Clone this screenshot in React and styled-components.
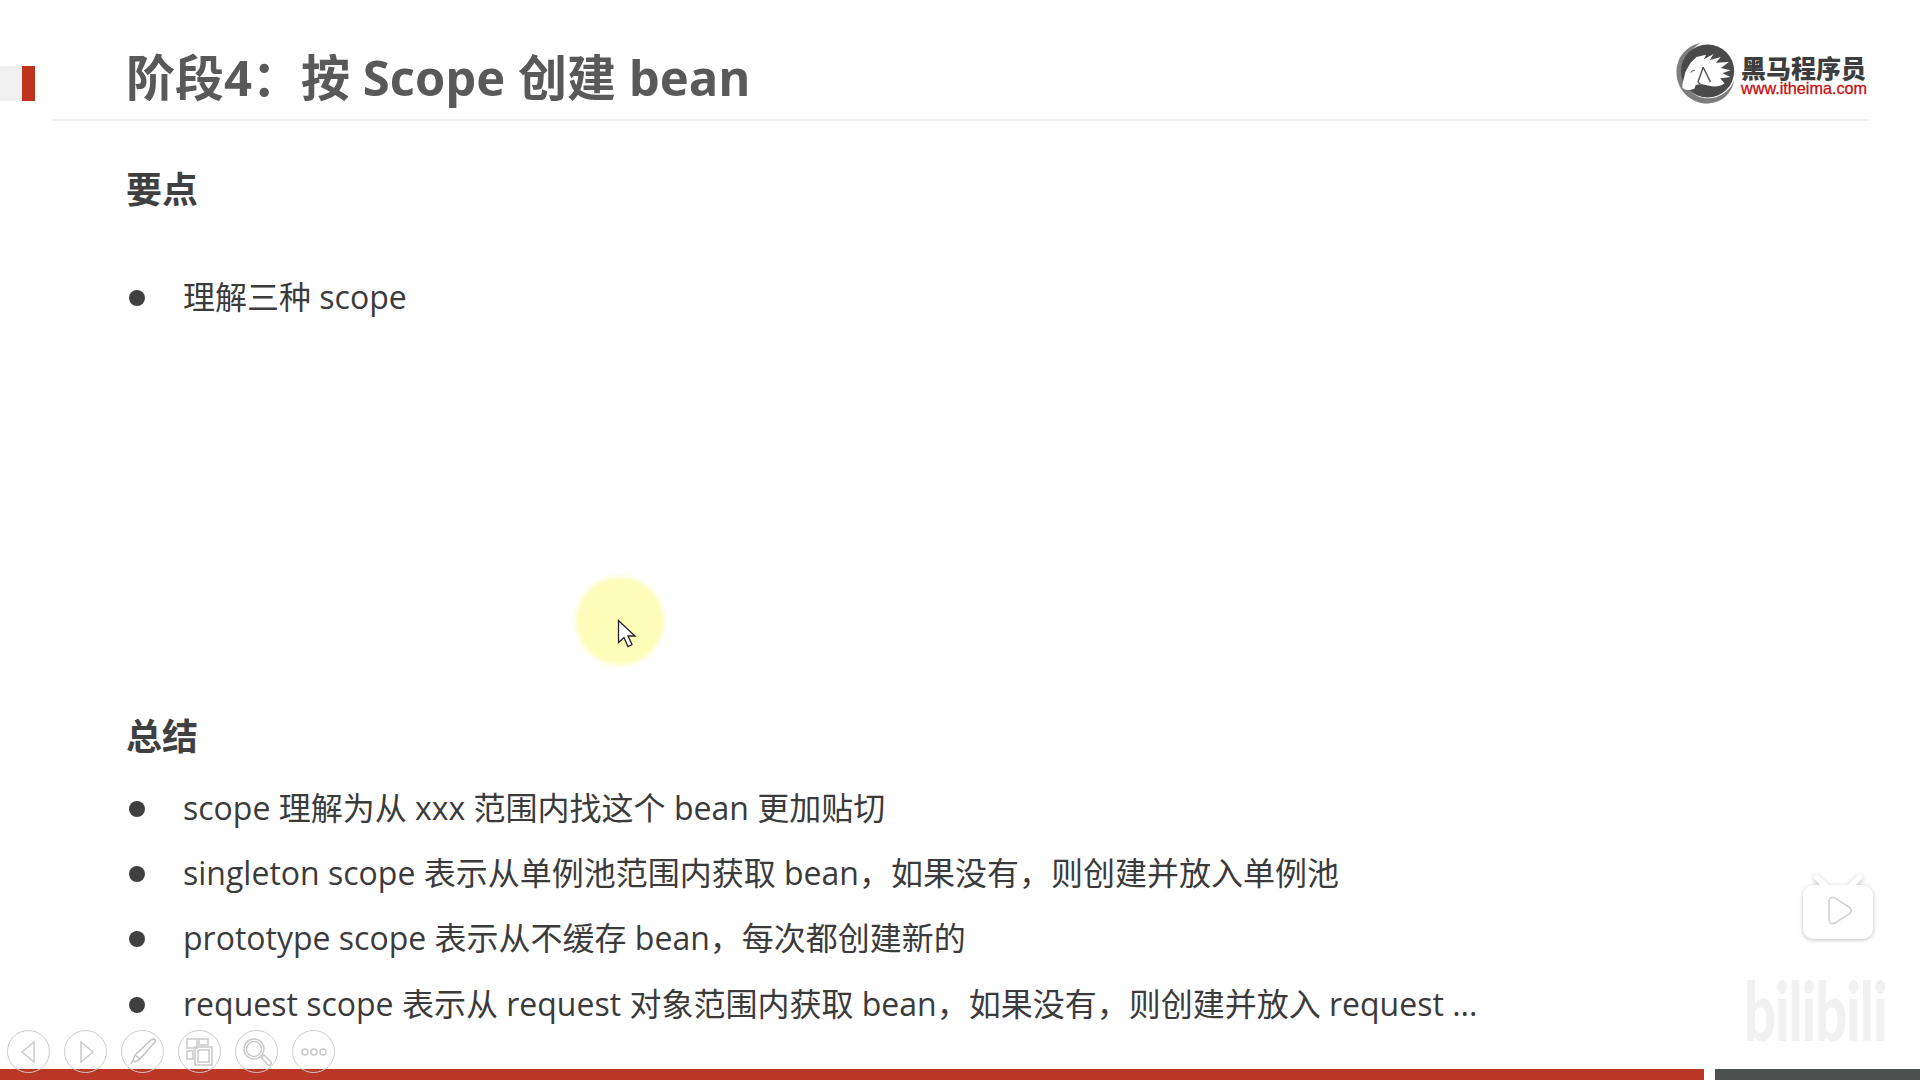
import React from "react";
import styled, { createGlobalStyle } from "styled-components";

const sans = `"Open Sans", "Noto Sans CJK SC", sans-serif`;

const GlobalStyle = createGlobalStyle`
  html, body {
    margin: 0;
    padding: 0;
    background: #fff;
  }
`;

const Slide = styled.div`
  position: relative;
  width: 1920px;
  height: 1080px;
  display: flex;
  flex-direction: column;
  overflow: hidden;
  background: #fff;
  font-family: ${sans};
`;

const Header = styled.header`
  height: 121px;
  margin-left: 52px;
  margin-right: 50px;
  padding: 0 3px 0 74px;
  box-sizing: border-box;
  display: flex;
  align-items: flex-start;
  justify-content: space-between;
  border-bottom: 2px solid #f2f2f2;
`;

const Title = styled.h1`
  margin: 41px 0 0;
  font-size: 49px;
  line-height: 72px;
  font-weight: 700;
  color: #595959;
  white-space: pre;
`;

const Marker = styled.div`
  position: absolute;
  left: 0;
  top: 66px;
  width: 22px;
  height: 35px;
  background: #f0f0f0;
  border-right: 13px solid #c0341d;
`;

const Logo = styled.div`
  display: flex;
  margin-top: 37px;
`;

const LogoMark = styled.svg`
  margin-right: -3px;
`;

const LogoText = styled.div`
  display: flex;
  flex-direction: column;
  margin-top: 17px;
`;

const LogoName = styled.div`
  font-family: "Noto Sans CJK SC", sans-serif;
  font-size: 25px;
  line-height: 26px;
  font-weight: 900;
  color: #3d3d3d;
  white-space: nowrap;
`;

const LogoUrl = styled.div`
  font-family: "Liberation Sans", sans-serif;
  font-size: 16.2px;
  line-height: 17px;
  color: #c40f0f;
  -webkit-text-stroke: 0.3px #c40f0f;
  white-space: nowrap;
`;

const Content = styled.main`
  flex: 1;
  padding: 45px 0 0 126px;
  display: flex;
  flex-direction: column;
`;

const Heading = styled.h2`
  margin: 0;
  font-size: 36px;
  line-height: 48px;
  font-weight: 700;
  color: #404040;
`;

const List = styled.ul`
  margin: ${(p) => p.$top}px 0 0;
  padding: 0;
  list-style: none;
  height: ${(p) => p.$height}px;
`;

const Item = styled.li`
  height: 65.3px;
  display: flex;
  align-items: center;
  font-size: 32px;
  color: #3b3b3b;
  white-space: pre;
`;

const Dot = styled.span`
  flex: none;
  width: 16px;
  height: 16px;
  margin: 6px 38px 0 3px;
  border-radius: 50%;
  background: #404040;
`;

const Footer = styled.footer`
  height: 11px;
  display: flex;
  gap: 11px;
`;

const FooterRed = styled.div`
  flex: 1;
  background: #b93724;
`;

const FooterDark = styled.div`
  width: 205px;
  background: #4c5150;
`;

const Toolbar = styled.nav`
  position: absolute;
  left: 7px;
  top: 1030px;
  display: flex;
  gap: 14px;
`;

const ToolButton = styled.div`
  width: 43px;
  height: 43px;
  box-sizing: border-box;
  border: 1.5px solid #cfcbcb;
  border-radius: 50%;
  display: flex;
  align-items: center;
  justify-content: center;
`;

const Spotlight = styled.div`
  position: absolute;
  left: 576px;
  top: 577px;
  width: 88px;
  height: 88px;
  border-radius: 50%;
  background: #fdfcb8;
  filter: blur(2.5px);
`;

const Pointer = styled.svg`
  position: absolute;
  left: 617px;
  top: 619px;
`;

const TvBadge = styled.svg`
  position: absolute;
  left: 1800px;
  top: 872px;
  filter: drop-shadow(0 1px 2px rgba(0, 0, 0, 0.25));
`;

const Watermark = styled.div`
  position: absolute;
  left: 1744px;
  top: 969px;
  font-family: "Lato", sans-serif;
  font-size: 56px;
  line-height: 56px;
  font-weight: 900;
  letter-spacing: -1px;
  color: #f1f1f1;
  transform: scaleY(1.47);
  transform-origin: left top;
`;

const FaintMark = styled.div`
  position: absolute;
  left: 1552px;
  top: 1008px;
  width: 175px;
  height: 34px;
  background: #fefefe;
  filter: blur(3px);
`;

const HorseLogo = () => (
  <LogoMark width="78" height="72" viewBox="0 0 210 195">
    <path
      d="M92 16C50 25 26 60 28 100c2 46 42 82 86 80 38-2 64-28 70-62-12 28-38 48-70 48-38 0-68-30-71-68-2-33 19-62 49-82z"
      fill="#7d7d7d"
    />
    <circle cx="112" cy="92" r="72" fill="#4a4a4a" />
    <path
      d="M44 128l8-34 14-24 16-16 26-6-6 12 26-14-10 16 30-8-14 16 36-2-22 16 26 6-22 8 22 10-28 4 12 14c-12 8-26 10-42 6-14-4-26-6-36-2l-4 10c-14 6-24 4-32-2z"
      fill="#fff"
    />
    <path d="M100 82l-14 40M100 82l20 40M86 122l6 6" stroke="#555" strokeWidth="4" fill="none" />
    <path d="M78 90c-6 0-10 3-12 6" stroke="#666" strokeWidth="3" fill="none" />
  </LogoMark>
);

const toolIcons = [
  <svg key="prev" width="20" height="24" viewBox="0 0 20 24" fill="none" stroke="#c9c9c9" strokeWidth="1.5">
    <path d="M15 2v20L3 12z" />
  </svg>,
  <svg key="next" width="20" height="24" viewBox="0 0 20 24" fill="none" stroke="#c9c9c9" strokeWidth="1.5">
    <path d="M5 2v20l12-10z" />
  </svg>,
  <svg key="pen" width="30" height="30" viewBox="0 0 30 30" fill="none" stroke="#c4c4c4" strokeWidth="1.5">
    <path d="M25 2c2 0 3 2 2 3L12 22l-5-4L23 3zM7 18l-2 5 2 2 5-3M5 23l-2 4" />
  </svg>,
  <svg key="grid" width="28" height="28" viewBox="0 0 28 28" fill="none" stroke="#c9c9c9" strokeWidth="1.5">
    <path d="M1 1h10v9H1zM13 1h9v6h-9zM1 13h6v8H1z" />
    <path d="M9 9h17v18H9z" />
    <path d="M12 12h11v12H12z" />
  </svg>,
  <svg key="search" width="30" height="30" viewBox="0 0 30 30" fill="none" stroke="#c9c9c9" strokeWidth="1.5">
    <circle cx="12" cy="12" r="10" />
    <circle cx="12" cy="12" r="7.5" />
    <path d="M19 20l3-2 7 7c1 2-1 4-3 3z" />
  </svg>,
  <svg key="more" width="26" height="10" viewBox="0 0 26 10" fill="none" stroke="#c9c9c9" strokeWidth="1.5">
    <circle cx="4" cy="5" r="3" />
    <circle cx="13" cy="5" r="3" />
    <circle cx="22" cy="5" r="3" />
  </svg>,
];

const summary = [
  "scope 理解为从 xxx 范围内找这个 bean 更加贴切",
  "singleton scope 表示从单例池范围内获取 bean，如果没有，则创建并放入单例池",
  "prototype scope 表示从不缓存 bean，每次都创建新的",
  "request scope 表示从 request 对象范围内获取 bean，如果没有，则创建并放入 request ...",
];

export default function App() {
  return (
    <Slide>
      <GlobalStyle />
      <Marker />
      <Header>
        <Title>阶段4：按 Scope 创建 bean</Title>
        <Logo>
          <HorseLogo />
          <LogoText>
            <LogoName>黑马程序员</LogoName>
            <LogoUrl>www.itheima.com</LogoUrl>
          </LogoText>
        </Logo>
      </Header>
      <Content>
        <Heading>要点</Heading>
        <List $top={48.5} $height={450.5}>
          <Item>
            <Dot />
            理解三种 scope
          </Item>
        </List>
        <Heading>总结</Heading>
        <List $top={12} $height={262}>
          {summary.map((line) => (
            <Item key={line}>
              <Dot />
              {line}
            </Item>
          ))}
        </List>
      </Content>
      <Footer>
        <FooterRed />
        <FooterDark />
      </Footer>

      <Spotlight />
      <Pointer width="20" height="30" viewBox="0 0 20 30">
        <path d="M1.5 1.5v22l5.500-5 4 9 4-2-4-8.500h7z" fill="#fff" stroke="#222" strokeWidth="1.300" />
      </Pointer>
      <FaintMark />
      <Watermark>bilibili</Watermark>
      <TvBadge width="76" height="72" viewBox="0 0 76 72">
        <path
          d="M18 3l11 10h18L58 3c3-2 6 2 4 4l-6 6h6c6 0 11 4 11 11v32c0 7-5 11-11 11H14C8 67 3 63 3 56V24c0-7 5-11 11-11h6l-6-6c-2-2 1-6 4-4z"
          fill="#fff"
        />
        <path
          d="M29 29c0-3 3-5 6-3l14 9c3 2 3 5 0 7l-14 9c-3 2-6 0-6-3z"
          fill="#fff"
          stroke="#cfcfcf"
          strokeWidth="1.500"
        />
      </TvBadge>
      <Toolbar>
        {toolIcons.map((icon) => (
          <ToolButton key={icon.key}>{icon}</ToolButton>
        ))}
      </Toolbar>
    </Slide>
  );
}
